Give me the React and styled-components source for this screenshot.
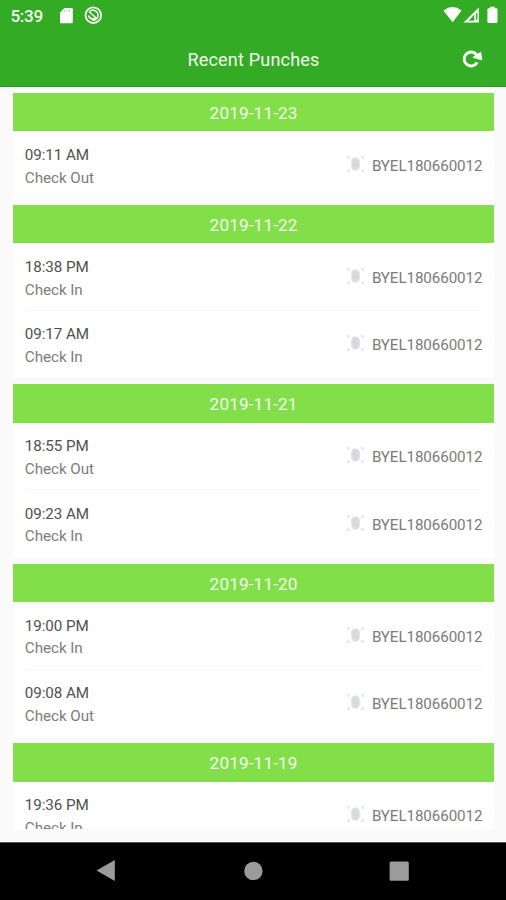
import React from "react";
import styled, { createGlobalStyle } from "styled-components";

const GlobalStyle = createGlobalStyle`
  * { box-sizing: border-box; }
  body { margin: 0; font-family: Roboto, "Liberation Sans", sans-serif; }
`;

const Screen = styled.div`
  display: flex;
  flex-direction: column;
  width: 506px;
  height: 900px;
  overflow: hidden;
  background: #fafafa;
`;

const Header = styled.header`
  flex: none;
  height: 86.5px;
  background: #33ab25;
  border-bottom: 1px solid #25a01b;
  color: #f1fbef;
`;

const StatusBar = styled.div`
  display: flex;
  justify-content: space-between;
  height: 32px;
  padding: 0 7px 0 10.4px;
`;

const StatusGroup = styled.div`
  display: flex;
  align-items: flex-start;
`;

const Clock = styled.span`
  width: 48.6px;
  padding-top: 6px;
  font-size: 17.2px;
  font-weight: 500;
  line-height: 21px;
  letter-spacing: -0.3px;
  white-space: nowrap;
`;

const TitleBar = styled.div`
  display: grid;
  grid-template-columns: 68px 1fr 68px;
  align-items: center;
  height: 54px;
`;

const Title = styled.h1`
  grid-column: 2;
  margin: 2px 0 0 1px;
  text-align: center;
  font-size: 18px;
  font-weight: 400;
  line-height: 24px;
  letter-spacing: 0.2px;
`;

const RefreshButton = styled.button`
  display: flex;
  margin: 0 0 0 22px;
  padding: 0;
  width: 24px;
  border: 0;
  background: none;
  color: #fff;
`;

const List = styled.main`
  flex: none;
  height: 742.5px;
  padding: 6.5px 11.6px 0 12.8px;
  overflow: hidden;
`;

const Day = styled.section`
  margin-bottom: 6.2px;
`;

const DayTitle = styled.h2`
  margin: 0;
  height: 38.4px;
  background: #82df49;
  color: #f4fcef;
  text-align: center;
  font-size: 17.2px;
  font-weight: 400;
  line-height: 40px;
  letter-spacing: 0.12px;
`;

const Rows = styled.div`
  background: #fff;
`;

const Row = styled.div`
  display: flex;
  align-items: center;
  justify-content: space-between;
  height: 67.45px;
  margin: 0 12px;
  border-bottom: 1px solid ${(p) => (p.$last ? "transparent" : "#f6f6f6")};
`;

const Punch = styled.div`
  display: flex;
  flex-direction: column;
  padding-top: 3.8px;
  line-height: 22.5px;
`;

const Time = styled.span`
  font-size: 15.2px;
  letter-spacing: -0.08px;
  color: #505050;
`;

const Kind = styled.span`
  font-size: 15.2px;
  letter-spacing: -0.04px;
  color: #7c7c7c;
`;

const Device = styled.div`
  display: flex;
  align-items: center;
  gap: 7.6px;
  padding-top: 2.4px;
  font-size: 15.2px;
  letter-spacing: -0.1px;
  color: #7a7a7a;

  svg {
    margin-bottom: 4px;
  }
`;

const NavBar = styled.nav`
  display: flex;
  align-items: center;
  justify-content: space-between;
  flex: none;
  height: 58.5px;
  margin-top: auto;
  padding: 0 96px 0 96px;
  background: #000;
  border-top: 1px solid #555;
`;

const SdCard = () => (
  <svg width="34" height="32" viewBox="0 0 34 32">
    <path d="M5.5 8h7.3q1 0 1 1v13.2q0 1-1 1H2q-1 0-1-1V12.5z" fill="#fff" />
    <path d="M5.5 9.6v2.2M8 9.6v2.2M10.5 9.6v2.2" stroke="#a9d9a4" strokeWidth="1" />
  </svg>
);

const Disc = () => (
  <svg width="20" height="32" viewBox="0 0 20 32" fill="none" stroke="#f4fcf3">
    <circle cx="0.3" cy="15.2" r="7.8" strokeWidth="1.8" />
    <path d="M-3.8 11.8A5.1 5.1 0 1 1-.7 20.2M-3.8 11.8l7.8 6.9M-4.6 15.5q1.2 3.4 4.3 3.6 1.8 0 3-1" strokeWidth="1.5" />
  </svg>
);

const DiscSlot = styled.span`
  display: flex;
  svg { overflow: visible; }
`;

const Signals = () => (
  <svg width="57" height="32" viewBox="442 0 57 32">
    <path d="M443.4 10.4q9.3-6.8 18.2 0L452.6 22.2z" fill="#fff" />
    <path d="M478.8 7.5V22.5H463.6z" fill="#fff" />
    <path d="M474.3 14.4V20.8H468.8zM475.9 14v5.8h1.5V12.3z" fill="#33ab25" />
    <path d="M490 8.2V6.8h4.8v1.4h1.5q1.2 0 1.2 1.2v12.4q0 1.2-1.2 1.2h-7.7q-1.2 0-1.2-1.2V9.4q0-1.2 1.2-1.2z" fill="#fff" />
  </svg>
);

const Refresh = () => (
  <svg width="24" height="24" viewBox="0 0 24 24">
    <path d="M17.2 15.6a7 7 0 1 1-.4-7.8" fill="none" stroke="currentColor" strokeWidth="2.9" />
    <path d="M12.9 10.3 20.8 5.2 21.8 12.9z" fill="currentColor" stroke="currentColor" strokeWidth=".8" />
  </svg>
);

const Fingerprint = () => (
  <svg width="17" height="18" viewBox="0 0 17 18">
    <path
      d="M1 4V1.8h2M14 1.8h2V4M1 13.8V16h2M14 16h2v-2.2"
      fill="none"
      stroke="#dfdfe5"
      strokeWidth="1.3"
    />
    <path d="M8.5 2.5c2.8 0 4.3 1.8 4.3 4.2v4.4c0 2.7-1.6 4.7-4.3 4.7s-4.3-2-4.3-4.7V6.7c0-2.4 1.5-4.2 4.3-4.2z" fill="#dcdde3" />
    <path d="M6.6 12V7.4q0-2 1.9-2t1.9 2V12M8.5 7.8v5" fill="none" stroke="#d0d1d9" strokeWidth=".8" />
  </svg>
);

const Back = () => (
  <svg width="20" height="24" viewBox="0 0 20 24">
    <path d="M.5 11.5 18.8 1v21z" fill="#9b9b9b" />
  </svg>
);

const Home = () => (
  <svg width="20" height="20" viewBox="0 0 20 20">
    <circle cx="10.4" cy="9.9" r="9.2" fill="#9b9b9b" />
  </svg>
);

const Recents = () => (
  <svg width="21" height="21" viewBox="0 0 21 21">
    <rect x=".6" y=".6" width="19.2" height="19.2" rx="1.5" fill="#9b9b9b" />
  </svg>
);

const days = [
  { date: "2019-11-23", punches: [["09:11 AM", "Check Out"]] },
  { date: "2019-11-22", punches: [["18:38 PM", "Check In"], ["09:17 AM", "Check In"]] },
  { date: "2019-11-21", punches: [["18:55 PM", "Check Out"], ["09:23 AM", "Check In"]] },
  { date: "2019-11-20", punches: [["19:00 PM", "Check In"], ["09:08 AM", "Check Out"]] },
  { date: "2019-11-19", punches: [["19:36 PM", "Check In"]] },
];

export default function App() {
  return (
    <Screen>
      <GlobalStyle />
      <Header>
        <StatusBar>
          <StatusGroup>
            <Clock>5:39</Clock>
            <SdCard />
            <DiscSlot>
              <Disc />
            </DiscSlot>
          </StatusGroup>
          <Signals />
        </StatusBar>
        <TitleBar>
          <Title>Recent Punches</Title>
          <RefreshButton aria-label="Refresh">
            <Refresh />
          </RefreshButton>
        </TitleBar>
      </Header>
      <List>
        {days.map((day) => (
          <Day key={day.date}>
            <DayTitle>{day.date}</DayTitle>
            <Rows>
              {day.punches.map(([time, kind], i) => (
                <Row key={time} $last={i === day.punches.length - 1}>
                  <Punch>
                    <Time>{time}</Time>
                    <Kind>{kind}</Kind>
                  </Punch>
                  <Device>
                    <Fingerprint />
                    <span>BYEL180660012</span>
                  </Device>
                </Row>
              ))}
            </Rows>
          </Day>
        ))}
      </List>
      <NavBar>
        <Back />
        <Home />
        <Recents />
      </NavBar>
    </Screen>
  );
}
